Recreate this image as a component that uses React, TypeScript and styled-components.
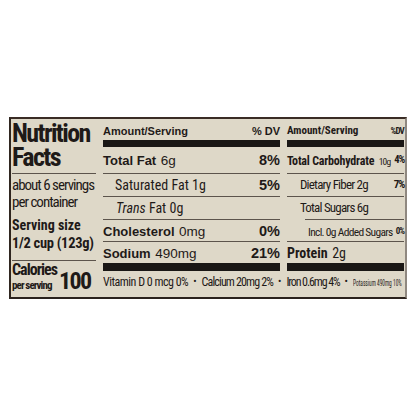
import React from "react";
import styled, { createGlobalStyle, css } from "styled-components";

const SANS = `"Liberation Sans", Arial, sans-serif`;
const INK = "#1e1a18";
const RULE = "#5c544c";

/* condensed face: Roboto on its width axis */
const cond = (weight: number, size: number, lh: number, stretch = 75) => css`
  font: ${weight} ${size}px/${lh}px "Roboto", "Liberation Sans", sans-serif;
  font-stretch: ${stretch}%;
`;

const Global = createGlobalStyle`
  html, body { margin: 0; padding: 0; background: #ffffff; }
  body { font-family: ${SANS}; color: ${INK}; }
  * { box-sizing: border-box; }
`;

const Page = styled.div`
  width: 416px;
  height: 416px;
  padding: 117px 0 0 9px;
  overflow: hidden;
`;

const Label = styled.section`
  width: 398px;
  height: 182px;
  background: #ded8c8;
  border-top: 2px solid #3a2c25;
  border-left: 2px solid #2f2620;
  border-bottom: 2px solid #2a221d;
  border-right: 2px solid #8f8880;
  display: flex;
  column-gap: 7px;
  padding: 0 1px;
`;

/* ---------- left brand column ---------- */
const Brand = styled.div`
  width: 84px;
  flex: none;
  display: flex;
  flex-direction: column;
`;

const Title = styled.h1`
  margin: 0;
  padding: 2px 0 4px;
  ${cond(700, 26, 24)}
  letter-spacing: -1.6px;
  border-bottom: 1px solid ${RULE};
`;

const Servings = styled.p`
  margin: 0;
  padding-top: 3px;
  ${cond(400, 15, 17)}
  letter-spacing: -1px;
  white-space: nowrap;
`;

const ServingSize = styled.div`
  padding: 5px 0 7px;
  border-bottom: 1px solid ${RULE};
  display: flex;
  flex-direction: column;
`;

const SizeLabel = styled.span<{ $size: number; $lh: number; $ls?: number }>`
  ${(p) => cond(700, p.$size, p.$lh)}
  letter-spacing: ${(p) => p.$ls ?? 0}px;
  white-space: nowrap;
`;

const CaloriesBlock = styled.div`
  flex: 1;
  display: flex;
  align-items: flex-end;
  column-gap: 2px;
  padding-bottom: 5px;
`;

const CaloriesText = styled.div`
  display: flex;
  flex-direction: column;
  row-gap: 2px;
`;

const CaloriesWord = styled.span`
  ${cond(700, 16, 16)}
  letter-spacing: -1px;
`;

const PerServing = styled.span`
  ${cond(700, 11, 12)}
  letter-spacing: -0.9px;
  white-space: nowrap;
`;

const CaloriesValue = styled.span`
  ${cond(700, 24, 22)}
  letter-spacing: -1.6px;
`;

/* ---------- nutrient panel ---------- */
const Panel = styled.div`
  flex: 1;
  display: flex;
  flex-direction: column;
  min-width: 0;
`;

const Columns = styled.div`
  display: flex;
  column-gap: 7px;
`;

const Column = styled.div<{ $width: number }>`
  width: ${(p) => p.$width}px;
  flex: none;
  display: flex;
  flex-direction: column;
`;

const HeadRow = styled.div<{ $narrow?: boolean }>`
  height: 21px;
  display: flex;
  justify-content: space-between;
  align-items: flex-end;
  padding-bottom: 3px;
  white-space: nowrap;
  ${(p) => (p.$narrow ? cond(700, 11, 12) : css`font: 700 11px/12px ${SANS};`)}
`;

const TinyDV = styled.span`
  ${cond(700, 9, 12)}
  letter-spacing: -0.8px;
`;

const ThickBar = styled.div<{ $h: number }>`
  height: ${(p) => p.$h}px;
  background: #1a1715;
`;

const Row = styled.div<{ $h: number; $indent?: number; $rule?: number | null }>`
  height: ${(p) => p.$h}px;
  display: flex;
  align-items: center;
  justify-content: space-between;
  padding-left: ${(p) => p.$indent ?? 0}px;
  padding-bottom: ${(p) => (p.$rule === null ? 0 : 1)}px;
  white-space: nowrap;
  background: ${(p) =>
    p.$rule === null
      ? "none"
      : `linear-gradient(${RULE}, ${RULE}) no-repeat right bottom / calc(100% - ${p.$rule ?? 0}px) 1px`};
`;

const Lead = styled.span`
  flex: 1 1 0;
  min-width: 0;
`;

const Name = styled.span<{ $narrow?: boolean; $size?: number; $ls?: number }>`
  ${(p) => (p.$narrow ? cond(700, p.$size ?? 13, 16) : css`font: 700 ${p.$size ?? 13}px/16px ${SANS};`)}
  letter-spacing: ${(p) => p.$ls ?? 0}px;
`;

const Amount = styled.span<{ $narrow?: boolean; $size?: number; $ls?: number }>`
  ${(p) => (p.$narrow ? cond(400, p.$size ?? 13.5, 16) : css`font: 400 ${p.$size ?? 13.5}px/16px ${SANS};`)}
  letter-spacing: ${(p) => p.$ls ?? 0}px;
`;

const Sub = styled.span<{ $size?: number; $ls?: number }>`
  ${(p) => cond(400, p.$size ?? 14, 16)}
  letter-spacing: ${(p) => p.$ls ?? 0}px;
  em { font-style: italic; }
`;

const Pct = styled.span<{ $narrow?: boolean; $size?: number; $ls?: number }>`
  flex: none;
  ${(p) => (p.$narrow ? cond(700, p.$size ?? 14.5, 16) : css`font: 700 ${p.$size ?? 14.5}px/16px ${SANS};`)}
  letter-spacing: ${(p) => p.$ls ?? 0}px;
`;

const Footnote = styled.div`
  flex: 1;
  display: flex;
  align-items: center;
  padding-bottom: 4px;
  column-gap: 5px;
  overflow: hidden;
  white-space: nowrap;
  ${cond(400, 12, 14)}
`;

const Note = styled.span<{ $ls?: number }>`
  flex: none;
  letter-spacing: ${(p) => p.$ls ?? 0}px;
`;

const Dot = styled.span`
  flex: none;
  font-size: 10px;
`;

const SqueezedSlot = styled.span`
  flex: 1 1 0;
  min-width: 0;
`;

const Squeezed = styled.span`
  display: inline-block;
  font-size: 9.5px;
  transform: scaleX(0.57);
  transform-origin: left center;
`;

export default function App() {
  return (
    <>
      <Global />
      <Page>
        <Label>
          <Brand>
            <Title>
              Nutrition
              <br />
              Facts
            </Title>
            <Servings>
              about 6 servings
              <br />
              per container
            </Servings>
            <ServingSize>
              <SizeLabel $size={14} $lh={18}>Serving size</SizeLabel>
              <SizeLabel $size={14.5} $lh={19} $ls={-0.3}>1/2 cup (123g)</SizeLabel>
            </ServingSize>
            <CaloriesBlock>
              <CaloriesText>
                <CaloriesWord>Calories</CaloriesWord>
                <PerServing>per serving</PerServing>
              </CaloriesText>
              <CaloriesValue>100</CaloriesValue>
            </CaloriesBlock>
          </Brand>

          <Panel>
            <Columns>
              <Column $width={177}>
                <HeadRow>
                  <span>Amount/Serving</span>
                  <span>% DV</span>
                </HeadRow>
                <ThickBar $h={7} />
                <Row $h={27}>
                  <Lead>
                    <Name>Total Fat</Name> <Amount>6g</Amount>
                  </Lead>
                  <Pct>8%</Pct>
                </Row>
                <Row $h={23} $indent={12}>
                  <Sub>Saturated Fat 1g</Sub>
                  <Pct>5%</Pct>
                </Row>
                <Row $h={23} $indent={13}>
                  <Sub>
                    <em>Trans</em> Fat 0g
                  </Sub>
                </Row>
                <Row $h={22}>
                  <Lead>
                    <Name>Cholesterol</Name> <Amount>0mg</Amount>
                  </Lead>
                  <Pct>0%</Pct>
                </Row>
                <Row $h={21} $rule={null}>
                  <Lead>
                    <Name>Sodium</Name> <Amount>490mg</Amount>
                  </Lead>
                  <Pct>21%</Pct>
                </Row>
                <ThickBar $h={8} />
              </Column>

              <Column $width={117}>
                <HeadRow $narrow>
                  <span>Amount/Serving</span>
                  <TinyDV>%DV</TinyDV>
                </HeadRow>
                <ThickBar $h={7} />
                <Row $h={27}>
                  <Lead>
                    <Name $narrow $size={12} $ls={-0.2}>Total Carbohydrate</Name>{" "}
                    <Amount $narrow $size={9.5} $ls={-0.8}>10g</Amount>
                  </Lead>
                  <Pct $narrow $size={10.5} $ls={-1.1}>4%</Pct>
                </Row>
                <Row $h={23} $indent={13}>
                  <Sub $size={13} $ls={-0.8}>Dietary Fiber 2g</Sub>
                  <Pct $narrow $size={11} $ls={-1.2}>7%</Pct>
                </Row>
                <Row $h={23} $indent={13} $rule={18}>
                  <Sub $size={13} $ls={-0.8}>Total Sugars 6g</Sub>
                </Row>
                <Row $h={22} $indent={21}>
                  <Lead>
                    <Sub $size={11.5} $ls={-0.7}>Incl. 0g Added Sugars</Sub>
                  </Lead>
                  <Pct $narrow $size={9} $ls={-1}>0%</Pct>
                </Row>
                <Row $h={21} $rule={null}>
                  <Lead>
                    <Name $narrow $size={14}>Protein</Name> <Amount $narrow $size={14}>2g</Amount>
                  </Lead>
                </Row>
                <ThickBar $h={8} />
              </Column>
            </Columns>

            <Footnote>
              <Note $ls={-0.5}>Vitamin D 0 mcg 0%</Note>
              <Dot>•</Dot>
              <Note $ls={-0.85}>Calcium 20mg 2%</Note>
              <Dot>•</Dot>
              <Note $ls={-1.1}>Iron 0.6mg 4%</Note>
              <Dot>•</Dot>
              <SqueezedSlot>
                <Squeezed>Potassium 490mg 10%</Squeezed>
              </SqueezedSlot>
            </Footnote>
          </Panel>
        </Label>
      </Page>
    </>
  );
}
